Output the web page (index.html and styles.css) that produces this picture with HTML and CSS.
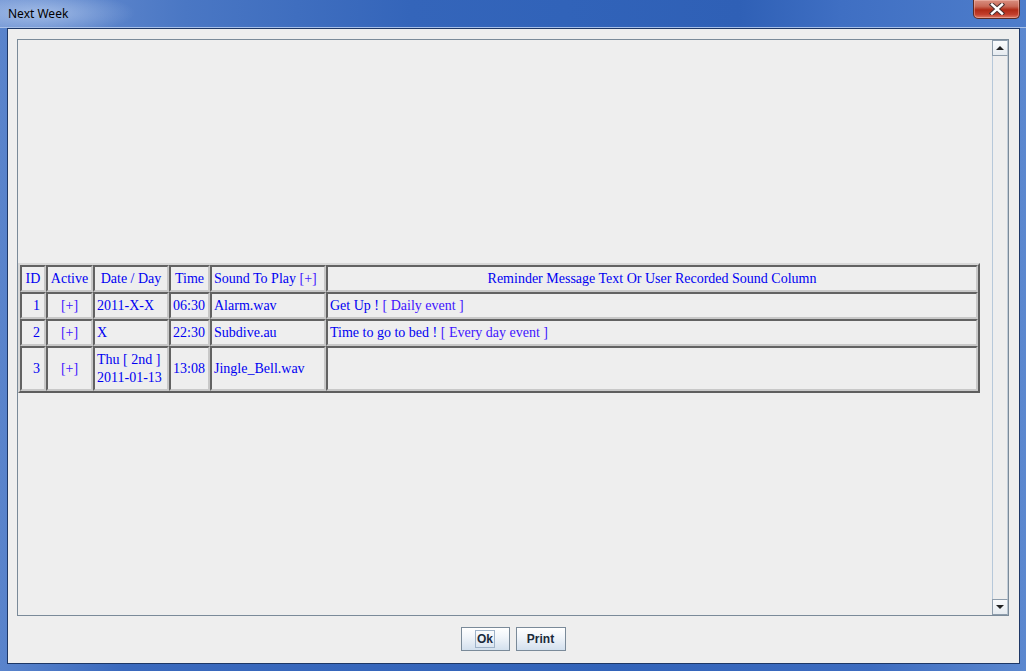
FILE: index.html
```html
<!DOCTYPE html>
<html lang="en">
<head>
    <meta charset="UTF-8">
    <title>Next Week</title>
    <link rel="stylesheet" href="styles.css">
</head>
<body>
    <div class="window">
        <div class="titlebar">
            <span class="title">Next Week</span>
            <div class="close-btn">
                <svg width="18" height="12" viewBox="0 0 18 12">
                    <path d="M4 1.5 L14 10.5 M14 1.5 L4 10.5" stroke="#4a3030" stroke-width="4.4" stroke-linecap="square"/>
                    <path d="M4 1.5 L14 10.5 M14 1.5 L4 10.5" stroke="#ffffff" stroke-width="2.4" stroke-linecap="square"/>
                </svg>
            </div>
        </div>

        <div class="client">
            <div class="scroll-pane">
                <div class="viewport">
                    <table class="reminders">
                        <tr>
                            <td class="c-id center">ID</td>
                            <td class="c-active center">Active</td>
                            <td class="c-date center">Date / Day</td>
                            <td class="c-time center">Time</td>
                            <td class="c-sound">Sound To Play <span class="tag">[+]</span></td>
                            <td class="center">Reminder Message Text Or User Recorded Sound Column</td>
                        </tr>
                        <tr>
                            <td class="right">1</td>
                            <td class="center"><span class="tag">[+]</span></td>
                            <td>2011-X-X</td>
                            <td>06:30</td>
                            <td>Alarm.wav</td>
                            <td>Get Up ! <span class="tag">[ Daily event ]</span></td>
                        </tr>
                        <tr>
                            <td class="right">2</td>
                            <td class="center"><span class="tag">[+]</span></td>
                            <td>X</td>
                            <td>22:30</td>
                            <td>Subdive.au</td>
                            <td>Time to go to bed ! <span class="tag">[ Every day event ]</span></td>
                        </tr>
                        <tr class="tall">
                            <td class="right">3</td>
                            <td class="center"><span class="tag">[+]</span></td>
                            <td>Thu [ 2nd ]<br>2011-01-13</td>
                            <td>13:08</td>
                            <td>Jingle_Bell.wav</td>
                            <td></td>
                        </tr>
                    </table>
                </div>
                <div class="vscroll">
                    <div class="arrow-btn"><span class="tri-up"></span></div>
                    <div class="track"></div>
                    <div class="arrow-btn"><span class="tri-down"></span></div>
                </div>
            </div>

            <div class="buttons">
                <button class="btn btn-ok"><span class="focus">Ok</span></button>
                <button class="btn btn-print">Print</button>
            </div>
        </div>
    </div>
</body>
</html>
```

FILE: styles.css
```css
* {
    box-sizing: border-box;
}

html, body {
    margin: 0;
    padding: 0;
    width: 1026px;
    height: 671px;
    overflow: hidden;
}

.window {
    width: 1026px;
    height: 671px;
    display: flex;
    flex-direction: column;
    padding: 0 6px 7px 6px;
    background: linear-gradient(to right, #5a84cc 0%, #3a69bd 12%, #3263b9 60%, #3d6cc0 85%, #5c88cf 100%);
}

.titlebar {
    height: 28px;
    margin: 0 -6px;
    padding: 0 6px 0 8px;
    display: flex;
    justify-content: space-between;
    align-items: flex-start;
    border-bottom: 1px solid #a8c0e8;
    background:
        radial-gradient(ellipse 95px 22px at 40px 13px, rgba(200, 218, 245, 0.6), rgba(200, 218, 245, 0) 100%),
        linear-gradient(to right, #6f93d3 0%, #4a77c4 18%, #3465ba 40%, #3163b9 55%, #2f60b6 72%, #3f6fc3 82%, #4e7dcb 100%);
}

.title {
    margin-top: 7px;
    font-family: "Noto Sans", "Liberation Sans", sans-serif;
    font-size: 12px;
    line-height: 14px;
    color: #000;
}

.close-btn {
    width: 47px;
    height: 19px;
    display: flex;
    align-items: center;
    justify-content: center;
    border: 1px solid #5a2a24;
    border-top: none;
    border-radius: 0 0 5px 5px;
    background: linear-gradient(to bottom, #d98f80 0%, #c96a58 35%, #b02a16 55%, #c23e2c 80%, #dc7a66 100%);
    box-shadow: inset 0 0 0 1px rgba(255, 210, 200, 0.4);
}

.close-btn svg {
    display: block;
}

.client {
    flex: 1;
    display: flex;
    flex-direction: column;
    margin-left: 1px;
    border: 1px solid #1d3766;
    background-color: #eeeeee;
    padding: 10px 10px 0 9px;
}

.scroll-pane {
    flex: 1;
    display: flex;
    border: 1px solid #7a8a99;
    min-height: 0;
}

.viewport {
    flex: 1;
    display: flex;
    align-items: center;
    justify-content: flex-start;
}

.vscroll {
    width: 16px;
    display: flex;
    flex-direction: column;
    background-color: #eeeeee;
}

.arrow-btn {
    height: 16px;
    display: flex;
    align-items: center;
    justify-content: center;
    border: 1px solid #8d9cab;
    border-right-color: #b8c4d0;
    background: linear-gradient(to bottom, #fafbfc, #e6ebf0);
}

.tri-up {
    width: 0;
    height: 0;
    border-left: 4px solid transparent;
    border-right: 4px solid transparent;
    border-bottom: 4px solid #222;
}

.tri-down {
    width: 0;
    height: 0;
    border-left: 4px solid transparent;
    border-right: 4px solid transparent;
    border-top: 4px solid #222;
}

.track {
    flex: 1;
    border-left: 1px solid #b6c8da;
    border-right: 1px solid #c2cdd8;
}

.reminders {
    width: 962px;
    table-layout: fixed;
    border-collapse: separate;
    border-spacing: 0;
    border: 2px solid;
    border-color: #d8d8d8 #5e5e5e #5e5e5e #d8d8d8;
    font-family: "Liberation Serif", "Times New Roman", serif;
    font-size: 14px;
    color: #0000f2;
}

.reminders td {
    height: 27px;
    border: 2px solid;
    border-color: #626262 #c8c8c8 #c8c8c8 #626262;
    padding: 3px 2px 2px 2px;
    line-height: 18px;
    vertical-align: middle;
    white-space: nowrap;
    overflow: hidden;
}

.reminders tr.tall td {
    height: 45px;
}

.reminders .c-id { width: 26px; }
.reminders .c-active { width: 47px; }
.reminders .c-date { width: 76px; }
.reminders .c-time { width: 41px; }
.reminders .c-sound { width: 116px; }

.center {
    text-align: center;
}

.right {
    text-align: right;
}

.reminders td.right {
    padding-right: 4px;
}

.tag {
    color: #3f14ff;
}

.buttons {
    display: flex;
    justify-content: center;
    gap: 6px;
    padding: 11px 0 12px 0;
}

.btn {
    height: 24px;
    padding: 0;
    display: flex;
    align-items: center;
    justify-content: center;
    border: 1px solid #7a8a99;
    border-radius: 0;
    background: linear-gradient(to bottom, #ffffff 0%, #f1f5fa 40%, #d3e0ee 100%);
    font-family: "Liberation Sans", Arial, sans-serif;
    font-weight: bold;
    font-size: 12px;
    color: #1b2a3c;
}

.btn-ok {
    width: 49px;
}

.btn-print {
    width: 50px;
}

.btn .focus {
    border: 1px solid #9fb2c8;
    padding: 1px 1px;
    line-height: 14px;
}
```
